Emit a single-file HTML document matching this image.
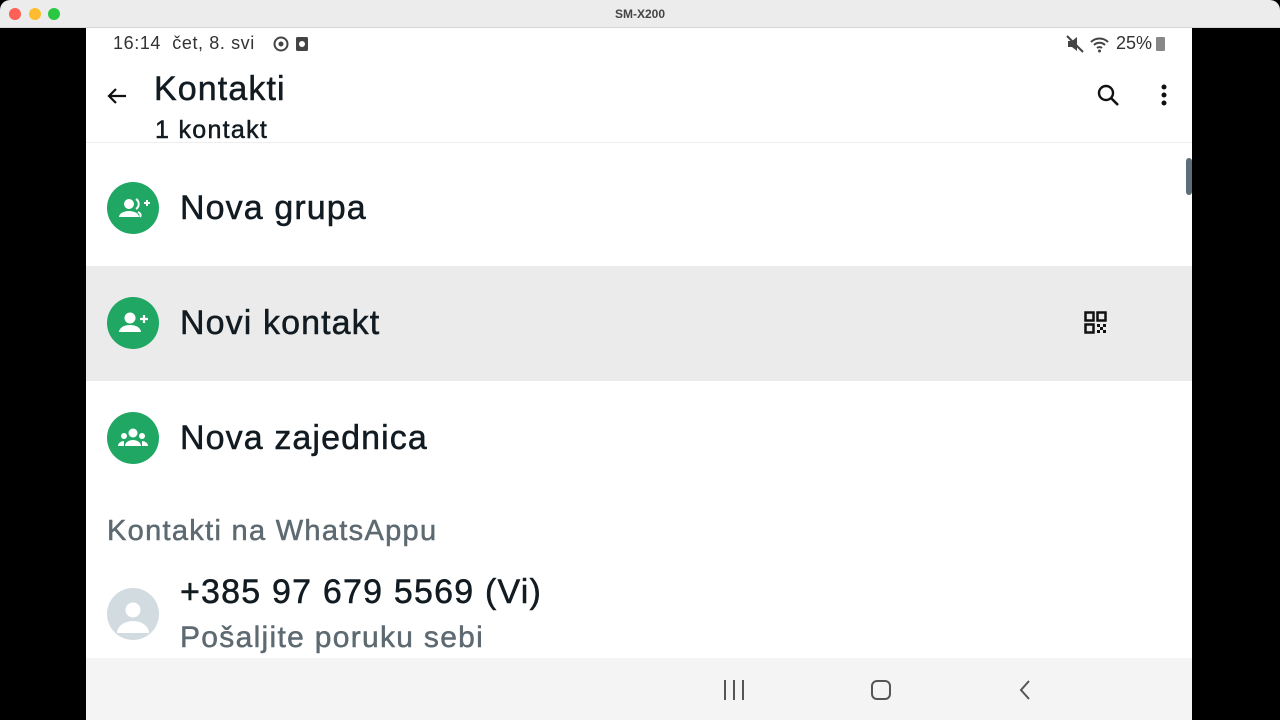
<!DOCTYPE html>
<html><head><meta charset="utf-8"><style>
*{margin:0;padding:0;box-sizing:border-box}
body{width:1280px;height:720px;background:#000;font-family:"Liberation Sans","DejaVu Sans",sans-serif;position:relative;overflow:hidden}
.tb{position:absolute;left:0;top:0;width:1280px;height:28px;background:#ececec;border-bottom:1px solid #d6d6d6;border-radius:10px 10px 0 0}
.dot{position:absolute;top:8px;width:12px;height:12px;border-radius:50%}
.tt{position:absolute;top:7px;width:100%;text-align:center;font-size:12px;font-weight:bold;color:#444}
.scr{position:absolute;left:86px;top:28px;width:1106px;height:692px;background:#fff;overflow:hidden}
.abs{position:absolute;white-space:nowrap}
.row{position:absolute;left:0;width:1106px;height:115px}
.ic{position:absolute;left:21px;width:52px;height:52px;border-radius:50%;background:#21a764}
.lbl{position:absolute;left:94px;font-size:34px;color:#111b21;letter-spacing:1.1px;-webkit-text-stroke:0.5px #111b21}
.md{-webkit-text-stroke:0.5px currentColor}
</style></head><body>
<div class="tb"><div class="dot" style="left:9px;background:#fe5f57"></div><div class="dot" style="left:29px;background:#febc2e"></div><div class="dot" style="left:48px;background:#28c840"></div><div class="tt">SM-X200</div></div>
<div class="scr">
<div class="abs" style="left:27px;top:5px;font-size:18px;color:#333;letter-spacing:0.6px">16:14&nbsp;&nbsp;čet, 8. svi</div>
<svg class="abs" style="left:186px;top:7px" width="36" height="18"><circle cx="9" cy="9" r="6.5" fill="none" stroke="#444" stroke-width="2"/><circle cx="9" cy="9" r="2.5" fill="#444"/><rect x="24" y="2" width="12" height="14" rx="1.5" fill="#444"/><circle cx="30" cy="9" r="3" fill="#fff"/></svg>
<svg class="abs" style="left:980px;top:7px" width="18" height="18"><path d="M2 6h4l5-4v14l-5-4H2z" fill="#444"/><path d="M1 1l16 16" stroke="#444" stroke-width="2"/></svg>
<svg class="abs" style="left:1003px;top:7px" width="24" height="18"><path d="M2 7a12 12 0 0 1 17 0M5 10a8 8 0 0 1 11 0M8 13a4 4 0 0 1 5 0" fill="none" stroke="#444" stroke-width="2"/><circle cx="10.5" cy="16" r="1.5" fill="#444"/></svg>
<div class="abs" style="left:1030px;top:5px;font-size:18px;color:#333">25%</div>
<div class="abs" style="left:1070px;top:9px;width:9px;height:14px;background:#888;border-radius:1px"></div>
<svg class="abs" style="left:19px;top:56px" width="24" height="24"><path d="M21 12H4M11 5l-7 7 7 7" fill="none" stroke="#111" stroke-width="2.2"/></svg>
<div class="abs md" style="left:68px;top:42px;font-size:34px;color:#111b21;letter-spacing:1.1px">Kontakti</div>
<div class="abs md" style="left:69px;top:88px;font-size:25px;color:#111b21;letter-spacing:1.3px">1 kontakt</div>
<svg class="abs" style="left:1010px;top:55px" width="26" height="26"><circle cx="10" cy="10" r="7" fill="none" stroke="#111" stroke-width="2.4"/><path d="M15 15l7 7" stroke="#111" stroke-width="2.6"/></svg>
<svg class="abs" style="left:1072px;top:55px" width="12" height="26"><circle cx="6" cy="4" r="2.5" fill="#111"/><circle cx="6" cy="12" r="2.5" fill="#111"/><circle cx="6" cy="20" r="2.5" fill="#111"/></svg>
<div class="abs" style="left:0;top:114px;width:1106px;height:1px;background:#eee"></div>
<div class="abs" style="left:1100px;top:130px;width:6px;height:37px;background:#5b6e79;border-radius:3px"></div>
<div class="row" style="top:123px"><div class="ic" style="top:31px"><svg width="52" height="52"><circle cx="22" cy="22" r="5" fill="#fff"/><path d="M12 35a10 6 0 0 1 20 0z" fill="#fff"/><path d="M29 17a6 6 0 0 1 0 10M31 30a6 4 0 0 1 2 5" fill="none" stroke="#fff" stroke-width="2"/><path d="M37 21h6M40 18v6" stroke="#fff" stroke-width="2"/></svg></div><div class="lbl" style="top:38px">Nova grupa</div></div>
<div class="row" style="top:238px;background:#ebebeb"><div class="ic" style="top:31px"><svg width="52" height="52"><circle cx="23" cy="21" r="5.5" fill="#fff"/><path d="M12 35a11 7 0 0 1 22 0z" fill="#fff"/><path d="M33 22h8M37 18v8" stroke="#fff" stroke-width="2.2"/></svg></div><div class="lbl" style="top:38px">Novi kontakt</div>
<svg class="abs" style="left:998px;top:45px" width="24" height="24"><rect x="1.5" y="1.5" width="8" height="8" fill="none" stroke="#111" stroke-width="2.5"/><rect x="13.5" y="1.5" width="8" height="8" fill="none" stroke="#111" stroke-width="2.5"/><rect x="1.5" y="13.5" width="8" height="8" fill="none" stroke="#111" stroke-width="2.5"/><path d="M13 13h3v3h-3zM19 13h3v3h-3zM16 16h3v3h-3zM13 19h3v3h-3zM19 19h3v3h-3z" fill="#111"/></svg></div>
<div class="row" style="top:353px"><div class="ic" style="top:31px"><svg width="52" height="52"><circle cx="26" cy="21" r="4.5" fill="#fff"/><circle cx="17" cy="24" r="3" fill="#fff"/><circle cx="35" cy="24" r="3" fill="#fff"/><path d="M18 34a8 6 0 0 1 16 0z M11 34a6 5 0 0 1 6-5v5z M41 34a6 5 0 0 0-6-5v5z" fill="#fff"/></svg></div><div class="lbl" style="top:38px">Nova zajednica</div></div>
<div class="abs md" style="left:21px;top:487px;font-size:29px;color:#5e6a71;letter-spacing:1.3px">Kontakti na WhatsAppu</div>
<div class="abs" style="left:21px;top:560px;width:52px;height:52px;border-radius:50%;background:#d2dbe0;overflow:hidden"><svg width="52" height="52"><circle cx="26" cy="22" r="7.5" fill="#fff"/><path d="M10 45a16 12 0 0 1 32 0z" fill="#fff"/></svg></div>
<div class="abs md" style="left:94px;top:545px;font-size:34px;color:#111b21;letter-spacing:1.2px">+385 97 679 5569 (Vi)</div>
<div class="abs md" style="left:94px;top:593px;font-size:30px;color:#5e6a71;letter-spacing:1.3px">Pošaljite poruku sebi</div>
<div class="abs" style="left:0;top:630px;width:1106px;height:62px;background:#f4f4f4"></div>
<div class="abs" style="left:638px;top:652px;width:20px;height:20px;border-left:2px solid #555;border-right:2px solid #555"><div style="margin-left:7px;width:2px;height:20px;background:#555"></div></div>
<div class="abs" style="left:785px;top:652px;width:20px;height:20px;border:2px solid #555;border-radius:6px"></div>
<svg class="abs" style="left:932px;top:651px" width="14" height="22"><path d="M11 2L3 11l8 9" fill="none" stroke="#555" stroke-width="2"/></svg>
</div>
</body></html>
